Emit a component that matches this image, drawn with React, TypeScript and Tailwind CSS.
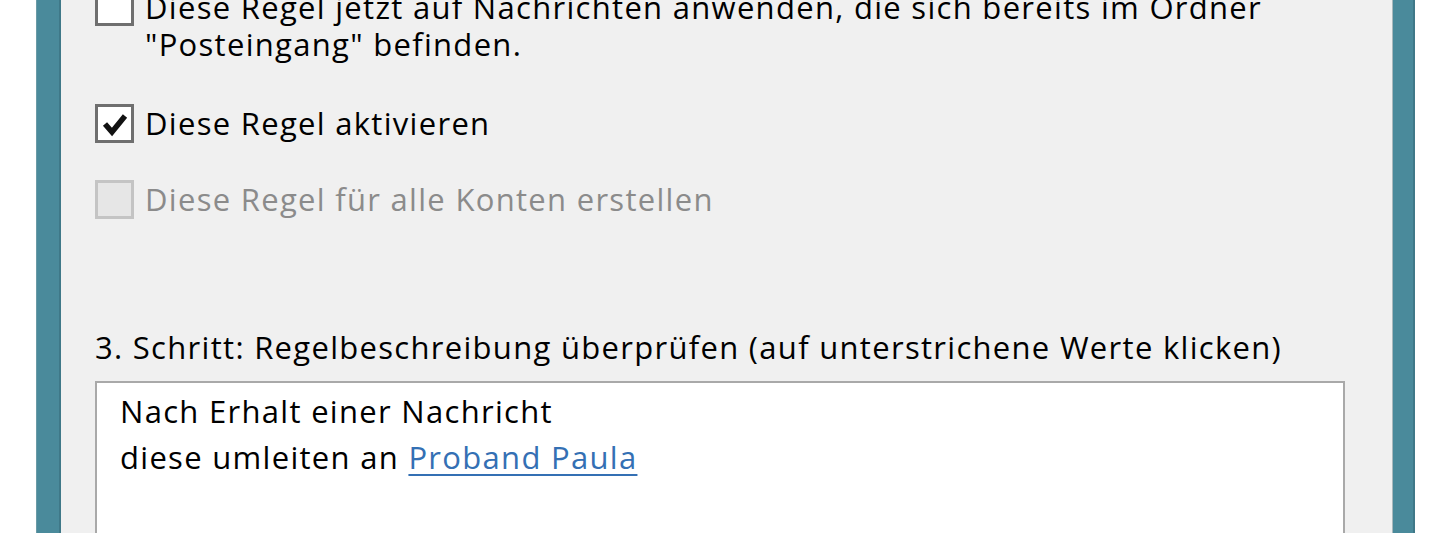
import React from "react";

function Box({ checked, disabled }: { checked?: boolean; disabled?: boolean }) {
  return (
    <div
      className={
        "w-[39px] h-[39px] shrink-0 border-[3px] flex items-center justify-center " +
        (disabled ? "border-[#c4c4c4] bg-[#e6e6e6]" : "border-[#6f6f6f] bg-white")
      }
    >
      {checked && (
        <svg width="28" height="26" viewBox="0 0 28 26">
          <path d="M4 13 L11 21 L24 5" fill="none" stroke="#111" strokeWidth="5.5" strokeLinejoin="miter" strokeLinecap="butt" />
        </svg>
      )}
    </div>
  );
}

export default function App() {
  return (
    <div
      className="w-[1440px] h-[533px] overflow-hidden flex bg-white text-black"
      style={{ fontFamily: '"Open Sans", "Noto Sans", sans-serif' }}
    >
      <div className="w-[36px] shrink-0 bg-white" />
      <div className="w-[25px] shrink-0 bg-[#4a8a9b] border-l border-[#6a9aa6] border-r-2 border-r-[#3f7888]" />
      <div className="flex-1 bg-[#f0f0f0] pl-[34px] pr-[47px] text-[31px] leading-[37px] tracking-[1.3px]">
        <div className="flex items-start gap-[11px] mt-[-13px]">
          <Box />
          <div className="pt-[2px] whitespace-nowrap">
            Diese Regel jetzt auf Nachrichten anwenden, die sich bereits im Ordner
            <br />
            "Posteingang" befinden.
          </div>
        </div>
        <div className="flex items-center gap-[11px] mt-[41px]">
          <Box checked />
          <span>Diese Regel aktivieren</span>
        </div>
        <div className="flex items-center gap-[11px] mt-[37px] text-[#8b8b8b]">
          <Box disabled />
          <span>Diese Regel für alle Konten erstellen</span>
        </div>
        <div className="mt-[110px] whitespace-nowrap">3. Schritt: Regelbeschreibung überprüfen (auf unterstrichene Werte klicken)</div>
        <div className="mt-[15px] h-[200px] bg-white border-2 border-[#a9a9a9] border-b-0 pl-[23px] pt-[5px] leading-[46px]">
          <div>Nach Erhalt einer Nachricht</div>
          <div>
            diese umleiten an{" "}
            <span className="text-[#3470b4] underline decoration-[#3470b4] underline-offset-[5px] decoration-2">Proband Paula</span>
          </div>
        </div>
      </div>
      <div className="w-[23px] shrink-0 bg-[#4a8a9b] border-l border-[#a8b8bc] border-r-2 border-r-[#3f7888]" />
      <div className="w-[25px] shrink-0 bg-white" />
    </div>
  );
}
